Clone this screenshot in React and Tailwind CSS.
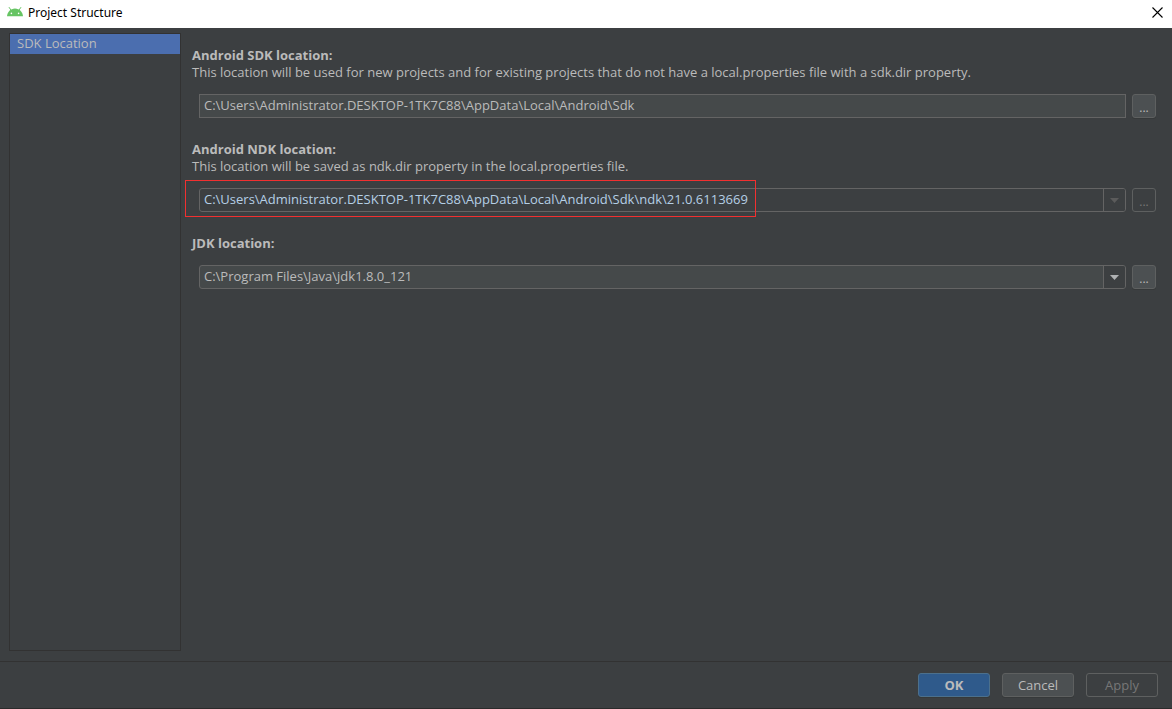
const SECTIONS = ["SDK Location"];

const SDK_PATH = "C:\\Users\\Administrator.DESKTOP-1TK7C88\\AppData\\Local\\Android\\Sdk";
const NDK_PATH = "C:\\Users\\Administrator.DESKTOP-1TK7C88\\AppData\\Local\\Android\\Sdk\\ndk\\21.0.6113669";
const JDK_PATH = "C:\\Program Files\\Java\\jdk1.8.0_121";

function AndroidIcon() {
  return (
    <svg width="16" height="10" viewBox="0 0 16 10" aria-hidden="true">
      <path d="M2.2 0.5 4.2 3.4M13.8 0.5 11.8 3.4" stroke="#66c463" strokeWidth="1" strokeLinecap="round" />
      <path d="M0 9.2C0.3 5.2 3.6 1.6 8 1.6s7.7 3.6 8 7.6z" fill="#66c463" />
      <circle cx="4.4" cy="6.4" r="0.8" fill="#fff" />
      <circle cx="11.6" cy="6.4" r="0.8" fill="#fff" />
    </svg>
  );
}

function BrowseButton({ label, disabled }) {
  return (
    <button
      type="button"
      aria-label={label}
      disabled={disabled}
      className="h-6 w-6 shrink-0 rounded-[3px] border border-[#5e6060] bg-[#4c5052] pt-1 text-xs leading-3 text-[#bbbbbb] shadow-[0_1px_0_#36393a] disabled:bg-transparent disabled:text-[#777777] disabled:shadow-none"
    >
      ...
    </button>
  );
}

function ComboBox({ id, value, disabled }) {
  return (
    <div className="relative min-w-0 flex-1">
      <select
        id={id}
        disabled={disabled}
        className="block h-6 w-full appearance-none rounded-[3px] border border-[#646464] bg-[#45494a] px-1 pb-0.5 leading-5 text-[#bbbbbb] opacity-100 outline-none disabled:bg-[#3c3f41] disabled:text-[#b5cfe6]"
      >
        <option>{value}</option>
      </select>
      <span
        className={`pointer-events-none absolute inset-y-px right-px flex w-[22px] items-center justify-center rounded-r-[2px] border-l border-[#646464] bg-[#3c3f41] ${
          disabled ? "text-[#5b5b5b]" : "text-[#afb1b3]"
        }`}
      >
        <svg width="9" height="5" viewBox="0 0 9 5" aria-hidden="true">
          <path d="M0 0h9L4.5 5z" fill="currentColor" />
        </svg>
      </span>
    </div>
  );
}

export default function App() {
  return (
    <div className="flex min-h-screen flex-col border-b border-[#2b2b2b] bg-[#3c3f41] font-['Open_Sans','Noto_Sans',sans-serif] text-[13px] leading-[18px] text-[#bbbbbb]">
      {/* Title bar */}
      <header className="flex h-7 items-center bg-white pr-2 pb-1 pl-[7px] text-black">
        <AndroidIcon />
        <h1 className="ml-[5px] flex-1 pt-0.5 font-['Noto_Sans',sans-serif] text-xs leading-4">Project Structure</h1>
        <button type="button" aria-label="Close" className="flex h-6 w-3 items-center">
          <svg width="11" height="11" viewBox="0 0 11 11" aria-hidden="true">
            <path d="M0.5 0.5l10 10M10.5 0.5l-10 10" stroke="#000" strokeWidth="1.1" />
          </svg>
        </button>
      </header>

      <div className="flex flex-1">
        {/* Sidebar */}
        <nav className="mt-[5px] mb-[10px] ml-[9px] w-[172px] shrink-0 border border-[#323232]">
          {SECTIONS.map((name) => (
            <a key={name} href="#sdk" className="block h-5 bg-[#4b6eaf] px-[7px] leading-[18px]">
              {name}
            </a>
          ))}
        </nav>

        {/* Locations */}
        <main id="sdk" className="min-w-0 flex-1 space-y-[22px] pt-[18px] pr-4 pl-[11px]">
          <section>
            <label htmlFor="sdk-path" className="block font-bold">Android SDK location:</label>
            <p className="leading-4">
              This location will be used for new projects and for existing projects that do not have a
              local.properties file with a sdk.dir property.
            </p>
            <div className="mt-3.5 ml-[7px] flex gap-1.5">
              <input
                id="sdk-path"
                type="text"
                defaultValue={SDK_PATH}
                className="h-6 min-w-0 flex-1 border border-[#646464] bg-[#45494a] px-1 pb-0.5 outline-none"
              />
              <BrowseButton label="Browse for Android SDK" />
            </div>
          </section>

          <section>
            <label htmlFor="ndk-path" className="block font-bold">Android NDK location:</label>
            <p className="leading-4">This location will be saved as ndk.dir property in the local.properties file.</p>
            <div className="relative mt-3.5 ml-[7px] flex gap-1.5">
              <ComboBox id="ndk-path" value={NDK_PATH} disabled />
              <BrowseButton label="Browse for Android NDK" disabled />
              {/* Highlight around the NDK path */}
              <div className="pointer-events-none absolute -top-2 -left-3.5 h-[37px] w-[571px] border border-[#f23030]" />
            </div>
          </section>

          <section>
            <label htmlFor="jdk-path" className="block font-bold">JDK location:</label>
            <div className="mt-[13px] ml-[7px] flex gap-1.5">
              <ComboBox id="jdk-path" value={JDK_PATH} />
              <BrowseButton label="Browse for JDK" />
            </div>
          </section>
        </main>
      </div>

      {/* Dialog buttons */}
      <footer className="flex justify-end gap-3 border-t border-[#323232] pt-[11px] pr-3.5 pb-[11px]">
        <button type="button" className="h-6 w-18 rounded-[3px] border border-[#4c708c] bg-[#2f5a8b] font-bold shadow-[0_1px_0_#36393a]">
          OK
        </button>
        <button type="button" className="h-6 w-18 rounded-[3px] border border-[#5e6060] bg-[#4c5052] shadow-[0_1px_0_#36393a]">
          Cancel
        </button>
        <button type="button" disabled className="h-6 w-18 rounded-[3px] border border-[#5e6060] text-[#777777]">
          Apply
        </button>
      </footer>
    </div>
  );
}
